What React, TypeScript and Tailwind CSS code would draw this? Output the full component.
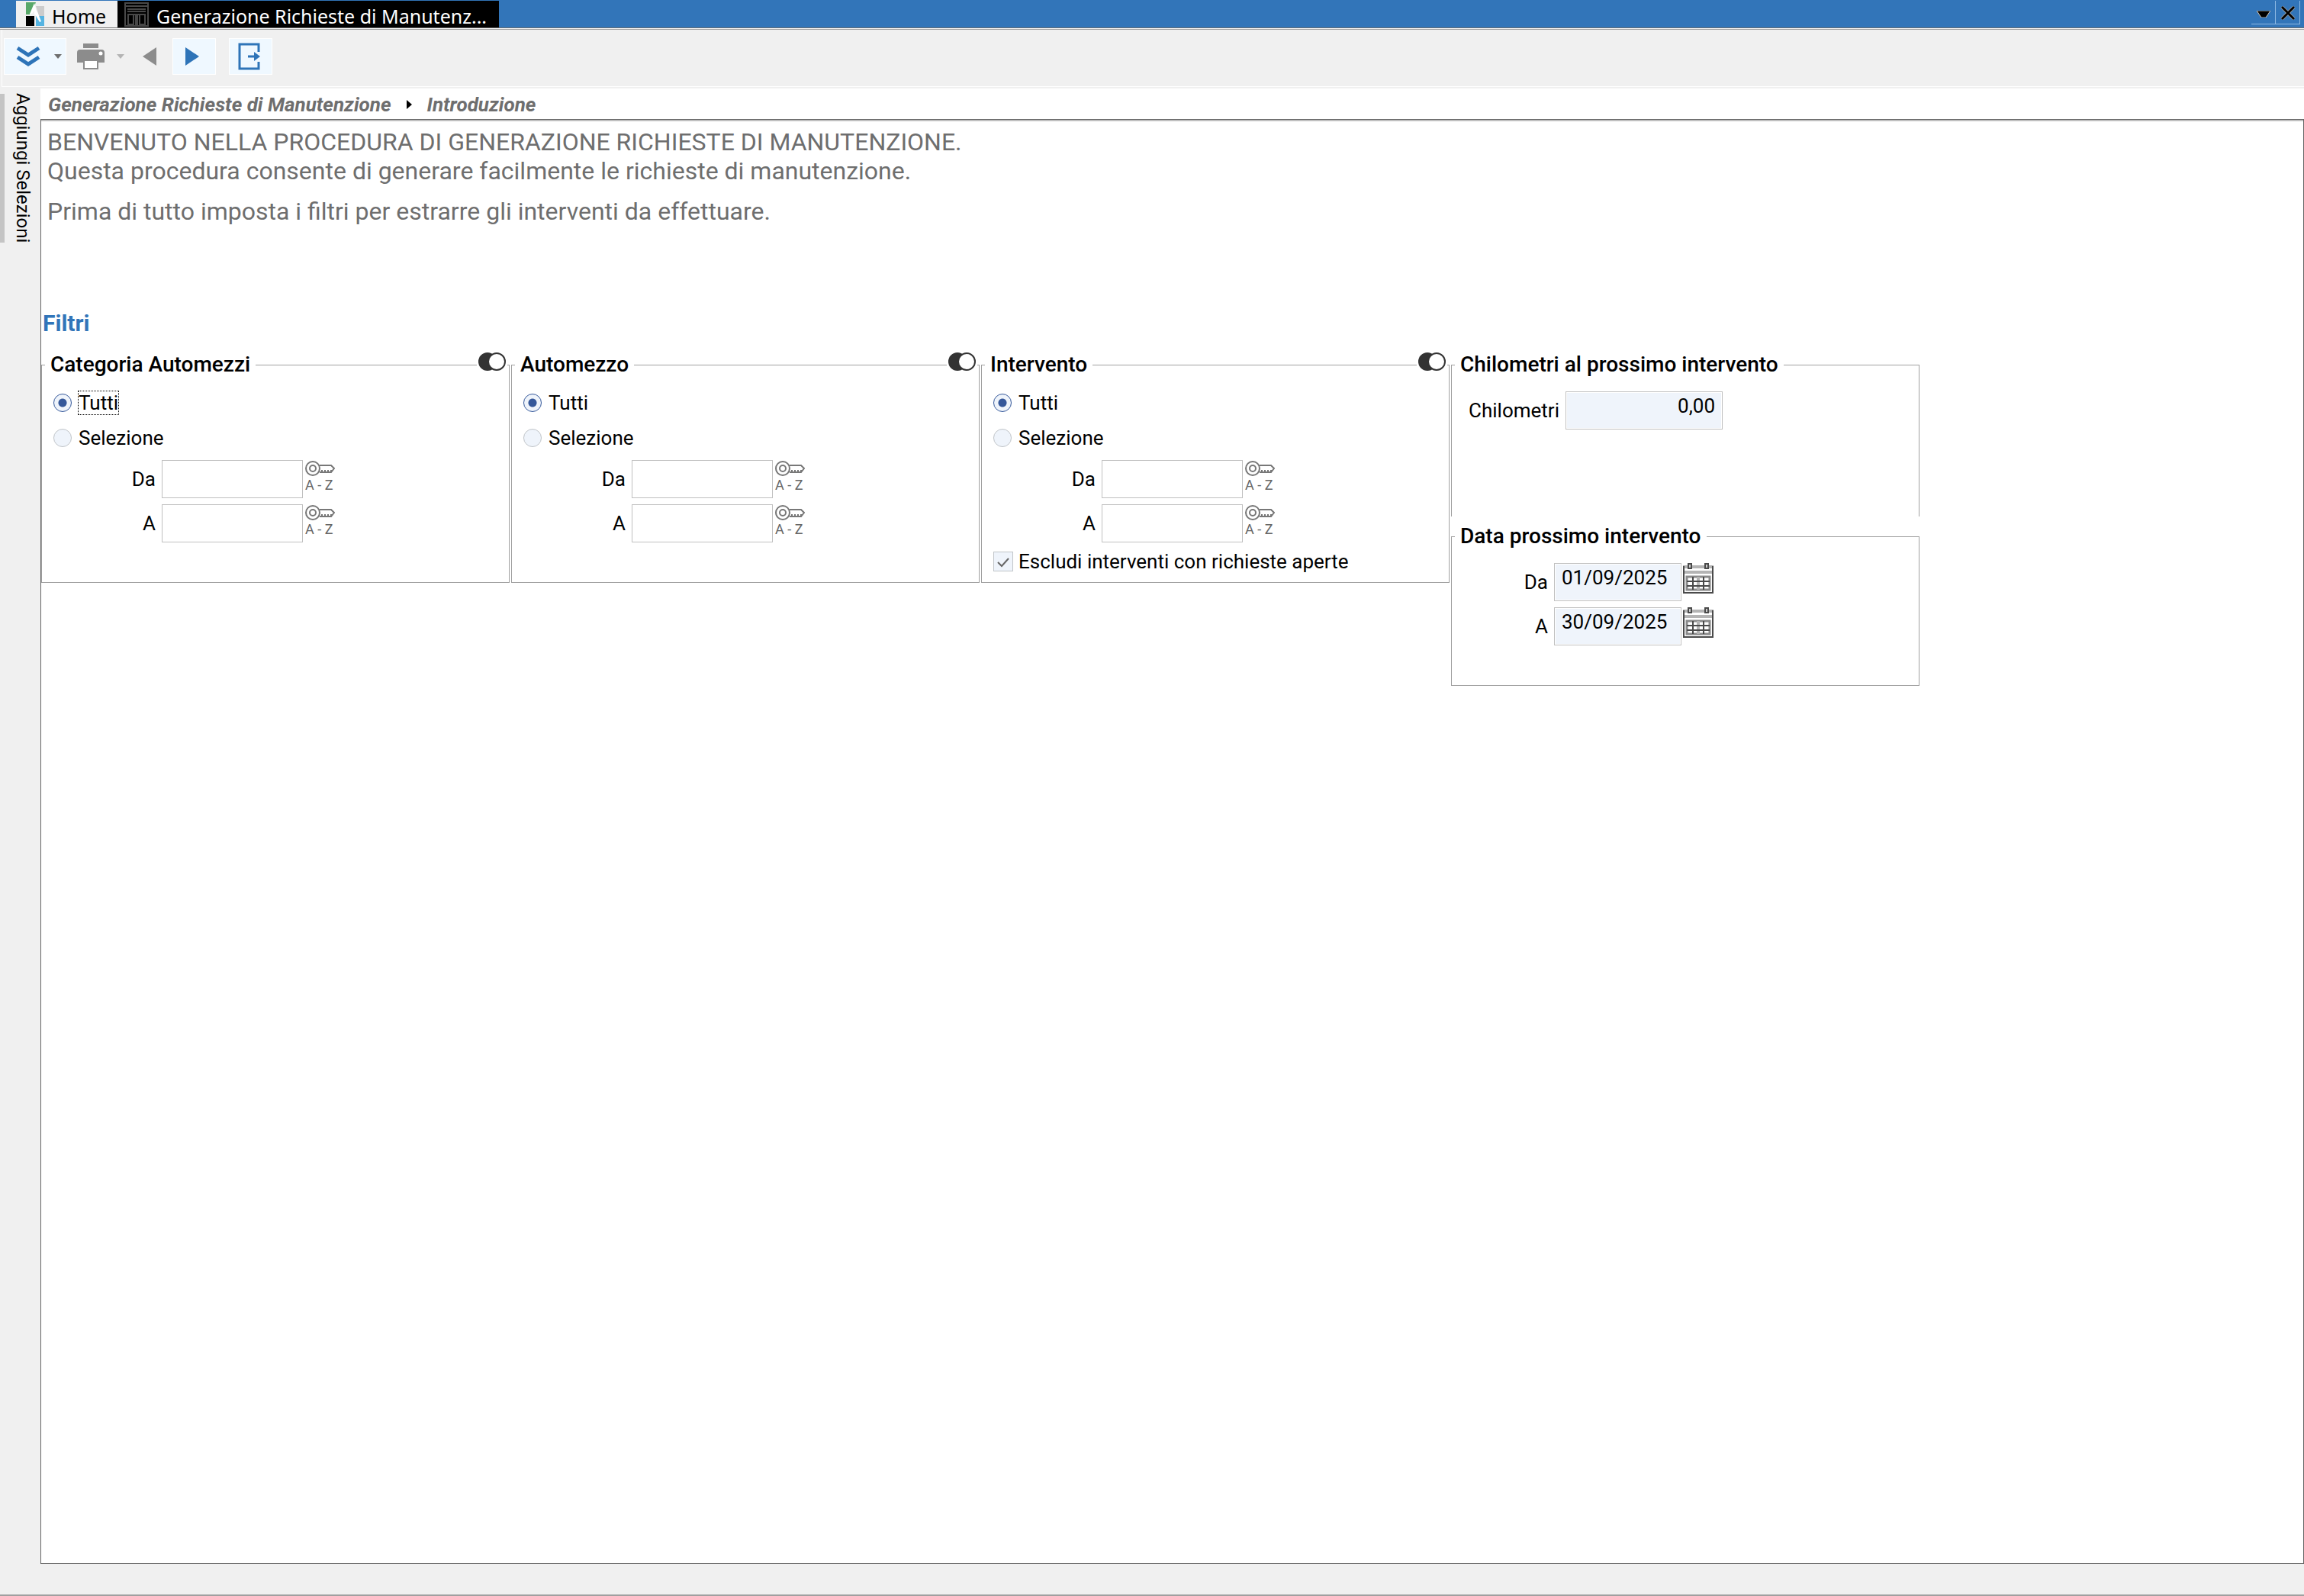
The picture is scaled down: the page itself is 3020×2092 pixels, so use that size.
import { useState } from 'react';
import type { ReactNode } from 'react';
import clsx from 'clsx';

function LogoIcon() {
  return (
    <svg className="w-6 h-8" viewBox="0 0 24 32">
      <path d="M0 0h13L7 16H0z" fill="#58a869" />
      <path d="M13 5h11v13h-7z" fill="#cccccc" />
      <path d="M0 18h11v13H0z" fill="#000" />
      <path d="M13 18h11v13H13z" fill="#56b4e2" />
      <path d="M11 1 5 15l1 2 5-6v5l3 1-1-9z" fill="#fff" />
      <path d="M14 10l6 15-2 1-6-10z" fill="#fff" />
    </svg>
  );
}

function FormIcon() {
  return (
    <svg className="w-8 h-8" viewBox="0 0 32 32" fill="none" stroke="#484848" strokeWidth="2">
      <path d="M1 1h30v30H1zM1 5h30M4 9h24M4 12h24" />
      <path d="M4 16h24M5 16v13h7V16M20 16v13h7V16" />
      <path d="M15 16h2v14h-2z" fill="#484848" />
    </svg>
  );
}

function PrinterIcon() {
  return (
    <svg className="w-9 h-9" viewBox="0 0 36 36">
      <path d="M8 1h20v6H8z" fill="#8c8c8c" />
      <path d="M4 9h28a4 4 0 0 1 4 4v13h-8v-4H8v4H0V13a4 4 0 0 1 4-4z" fill="#8c8c8c" />
      <path d="M9 23h18v11H9z" fill="#fff" stroke="#8c8c8c" strokeWidth="2" />
      <circle cx="31" cy="14" r="2.5" fill="#fff" />
    </svg>
  );
}

function ExitIcon() {
  return (
    <svg className="w-9 h-9" viewBox="0 0 36 36" fill="none" stroke="#2e74b8" strokeWidth="3">
      <path d="M30 12V2H5v32h25V25" />
      <path d="M16 18h11" />
      <path d="M24 12l8 6-8 6z" fill="#2e74b8" stroke="none" />
    </svg>
  );
}

function ChevronsIcon() {
  return (
    <svg className="w-8 h-7" viewBox="0 0 32 28" fill="none" stroke="#2e74b8" strokeWidth="5">
      <path d="M2 3l14 9 14-9M2 15l14 9 14-9" />
    </svg>
  );
}

function Caret({ color }: { color: string }) {
  return (
    <svg className="w-[10px] h-[6px]" viewBox="0 0 10 6">
      <path d="M0 0h10L5 6z" fill={color} />
    </svg>
  );
}

function ToggleIcon() {
  return (
    <svg className="w-9 h-[26px]" viewBox="0 0 36 26">
      <circle cx="12" cy="13" r="12" fill="#333" />
      <circle cx="24" cy="13" r="11" fill="#fff" stroke="#333" strokeWidth="2" />
    </svg>
  );
}

function KeyIcon() {
  return (
    <svg className="w-10 h-11" viewBox="0 0 40 44" fill="none" stroke="#777" strokeWidth="2">
      <circle cx="11" cy="11" r="9" />
      <circle cx="11" cy="11" r="4" />
      <path d="M20 7h15l4 4-4 5H20" />
      <path d="M22 14h14" strokeDasharray="2 2" />
      <text x="1" y="39" fontSize="18" fontFamily="Roboto, sans-serif" fill="#666" stroke="none">
        A - Z
      </text>
    </svg>
  );
}

function CalendarIcon() {
  return (
    <svg className="w-10 h-10" viewBox="0 0 40 40" fill="none">
      <path d="M0 5h40M0 12h40" stroke="#b4b4b4" strokeWidth="4" />
      <path d="M1 4v35h38V4" stroke="#4a4a4a" strokeWidth="2" />
      <path d="M7 1h4v6H7zM29 1h4v6h-4z" fill="#ccc" stroke="#4a4a4a" strokeWidth="2" />
      <path d="M5 18h30v17H5z" stroke="#8a8a8a" strokeWidth="3" />
      <path d="M20 18v17" stroke="#b4b4b4" strokeWidth="4" />
      <path d="M13 18v17M27 18v17M5 24h30M5 30h30" stroke="#4a4a4a" strokeWidth="2" />
    </svg>
  );
}

type PanelProps = { title: string; toggle?: boolean; className?: string; children: ReactNode };

function Panel({ title, toggle, className, children }: PanelProps) {
  return (
    <fieldset className={clsx('relative min-w-0 border border-[#a0a0a0]', className)}>
      <legend className="ml-1 px-[7px] text-[28px] font-medium leading-[30px]">{title}</legend>
      {toggle && (
        <button type="button" aria-label="Inverti" className="absolute -top-8 right-0.5 bg-white px-0.5">
          <ToggleIcon />
        </button>
      )}
      {children}
    </fieldset>
  );
}

type RadioProps = { group: string; label: string; checked: boolean; focused?: boolean; onChange: () => void };

function Radio({ group, label, checked, focused, onChange }: RadioProps) {
  return (
    <label className="flex h-[46px] items-center gap-[9px] pl-[15px]">
      <input
        type="radio"
        name={group}
        checked={checked}
        onChange={onChange}
        className="size-6 appearance-none rounded-full border border-[#c0c4c8] bg-[#eff4fb] checked:border-[#35589a] checked:bg-[radial-gradient(circle,#35589a_5px,#eff4fb_6px)]"
      />
      <span className={clsx('leading-[30px]', focused && 'outline-1 outline-dotted outline-black')}>{label}</span>
    </label>
  );
}

function RangeRow({ id, label }: { id: string; label: string }) {
  return (
    <div className="flex items-center">
      <label htmlFor={id} className="w-[157px] pr-2 text-right">
        {label}
      </label>
      <input id={id} type="text" className="h-[50px] w-[185px] border border-[#c0c0c0] bg-white px-2" />
      <button type="button" aria-label="Cerca" className="ml-0.5 self-start">
        <KeyIcon />
      </button>
    </div>
  );
}

function SelectionPanel({ id, title, focused, children }: { id: string; title: string; focused?: boolean; children?: ReactNode }) {
  const [mode, setMode] = useState('tutti');

  return (
    <Panel title={title} toggle className="h-[301px]">
      <div className="pt-3">
        <Radio group={id} label="Tutti" checked={mode === 'tutti'} focused={focused} onChange={() => setMode('tutti')} />
        <Radio group={id} label="Selezione" checked={mode === 'selezione'} onChange={() => setMode('selezione')} />
      </div>
      <div className="mt-[6px] flex flex-col gap-2">
        <RangeRow id={`${id}-da`} label="Da" />
        <RangeRow id={`${id}-a`} label="A" />
      </div>
      {children}
    </Panel>
  );
}

function DateRow({ id, label, value }: { id: string; label: string; value: string }) {
  return (
    <div className="flex items-center">
      <label htmlFor={id} className="w-[134px] pr-2 text-right">
        {label}
      </label>
      <input
        id={id}
        type="text"
        defaultValue={value}
        className="h-[50px] w-[167px] border border-[#c0c0c0] bg-[#eff4fb] pb-3 pl-[9px] inset-ring inset-ring-white"
      />
      <button type="button" aria-label="Apri calendario" className="ml-0.5 self-start">
        <CalendarIcon />
      </button>
    </div>
  );
}

export default function App() {
  return (
    <div className="flex min-h-screen flex-col border-b-2 border-[#a0a0a0] bg-[#f0f0f0] font-[Roboto,sans-serif] text-[26px] leading-[30px] text-black">
      {/* Window tabs */}
      <header className="flex h-9 bg-[#3275b9] pl-[21px] pt-px font-['Noto_Sans',sans-serif] text-[25px] leading-8">
        <button type="button" className="flex w-[133px] items-center gap-[10px] bg-[#f0f0f0] pl-[13px]">
          <LogoIcon />
          <span className="pt-1">Home</span>
        </button>
        <button type="button" className="flex w-[500px] items-center gap-[10px] bg-black pl-[9px] text-white">
          <FormIcon />
          <span className="whitespace-nowrap pt-1">Generazione Richieste di Manutenz...</span>
        </button>
        <div className="ml-auto mr-[5px] flex h-[31px]">
          <button type="button" aria-label="Elenco schede" className="flex w-8 items-center justify-center border-b border-r border-[#8db9e3] pt-1">
            <svg className="h-[9px] w-[18px]" viewBox="0 0 18 9">
              <path d="M0 0h18l-6 9H6z" fill="#000" stroke="#d8c8b4" strokeWidth="1" />
            </svg>
          </button>
          <button type="button" aria-label="Chiudi" className="flex w-8 items-center justify-center border-b border-r border-[#8db9e3] pt-0.5">
            <svg className="h-[18px] w-5" viewBox="0 0 20 18" fill="none">
              <path d="M2 1l16 16M18 1L2 17" stroke="#d8c8b4" strokeWidth="4" />
              <path d="M2 1l16 16M18 1L2 17" stroke="#000" strokeWidth="3" />
            </svg>
          </button>
        </div>
      </header>
      <div className="h-[3px] border-y border-t-[#6b6b6b] border-b-[#a0a0a0] bg-white" />

      {/* Toolbar */}
      <div className="mb-0.5 ml-0.5 flex h-[75px] items-start border-b border-l border-white pt-[11px]">
        <div className="ml-0.5 flex h-12 w-[82px] items-center border border-white bg-[#eff8ff]">
          <button type="button" aria-label="Espandi" className="ml-[15px]">
            <ChevronsIcon />
          </button>
          <button type="button" aria-label="Altre opzioni" className="ml-[18px]">
            <Caret color="#6e6e6e" />
          </button>
        </div>
        <div className="ml-[14px] flex h-12 w-[66px] items-center">
          <button type="button" aria-label="Stampa">
            <PrinterIcon />
          </button>
          <button type="button" aria-label="Opzioni di stampa" className="ml-4">
            <Caret color="#b4b4b4" />
          </button>
        </div>
        <button type="button" aria-label="Indietro" className="ml-5 flex h-12 w-5 items-center">
          <svg className="h-6 w-[18px]" viewBox="0 0 18 24">
            <path d="M18 0v24L0 12z" fill="#8c8c8c" />
          </svg>
        </button>
        <button type="button" aria-label="Avanti" className="ml-[19px] flex h-12 w-[57px] items-center border border-white bg-[#eff8ff] pl-4">
          <svg className="h-6 w-[18px]" viewBox="0 0 18 24">
            <path d="M0 0v24l18-12z" fill="#2e74b8" />
          </svg>
        </button>
        <button type="button" aria-label="Esci" className="ml-[17px] flex h-12 w-[57px] items-center border border-white bg-[#eff8ff] pl-2">
          <ExitIcon />
        </button>
      </div>

      <div className="flex flex-1">
        {/* Side tab */}
        <aside className="w-[53px] pt-[7px]">
          <button type="button" className="flex h-[195px] items-center border-l-[6px] border-[#c4c4c4] pl-[9px] text-[24px]">
            <span className="whitespace-nowrap [writing-mode:vertical-rl]">Aggiungi Selezioni</span>
          </button>
        </aside>

        <main className="flex min-w-0 flex-1 flex-col">
          <nav className="flex h-10 items-center bg-white pl-[10px] pt-0.5 text-[26px] font-bold italic text-[#6e6e6e]">
            <a href="#procedura">Generazione Richieste di Manutenzione</a>
            <svg className="mx-5 h-3 w-[7px]" viewBox="0 0 7 12">
              <path d="M0 0l7 6-7 6z" fill="#000" />
            </svg>
            <a href="#introduzione">Introduzione</a>
          </nav>

          <section className="flex-1 border border-[#646464] bg-white">
            <div className="border-t-2 border-[#c0c0c0] pl-2 pt-2 text-[32px] leading-[38px] text-[#6e6e6e]">
              <p>BENVENUTO NELLA PROCEDURA DI GENERAZIONE RICHIESTE DI MANUTENZIONE.</p>
              <p>Questa procedura consente di generare facilmente le richieste di manutenzione.</p>
              <p className="mt-[15px]">Prima di tutto imposta i filtri per estrarre gli interventi da effettuare.</p>
            </div>

            <h2 className="mt-[111px] pl-0.5 text-[30px] font-bold leading-[34px] text-[#3275b9]">Filtri</h2>

            <div className="mt-[22px] grid max-w-[2462px] grid-cols-4 items-start gap-0.5">
              <SelectionPanel id="categoria" title="Categoria Automezzi" focused />
              <SelectionPanel id="automezzo" title="Automezzo" />
              <SelectionPanel id="intervento" title="Intervento">
                <label className="mt-[10px] flex items-center gap-[7px] pl-[15px]">
                  <span className="grid size-[26px]">
                    <input
                      type="checkbox"
                      defaultChecked
                      className="peer col-start-1 row-start-1 size-[26px] appearance-none border border-[#c0c4c8] bg-[#eff4fb]"
                    />
                    <svg className="pointer-events-none invisible col-start-1 row-start-1 size-[26px] peer-checked:visible" viewBox="0 0 26 26" fill="none">
                      <path d="M6 14l5 5 9-10" stroke="#666" strokeWidth="2" />
                    </svg>
                  </span>
                  Escludi interventi con richieste aperte
                </label>
              </SelectionPanel>

              <div>
                <Panel title="Chilometri al prossimo intervento" className="h-[214px] border-b-0">
                  <div className="mt-5 flex items-center">
                    <label htmlFor="chilometri" className="w-[149px] pr-2 text-right">
                      Chilometri
                    </label>
                    <input
                      id="chilometri"
                      type="text"
                      defaultValue="0,00"
                      className="h-[50px] w-[206px] border border-[#c0c0c0] bg-[#eff4fb] pb-3 pr-[9px] text-right inset-ring inset-ring-white"
                    />
                  </div>
                </Panel>
                <Panel title="Data prossimo intervento" className="mt-[11px] h-[211px]">
                  <div className="mt-5 flex flex-col gap-2">
                    <DateRow id="data-da" label="Da" value="01/09/2025" />
                    <DateRow id="data-a" label="A" value="30/09/2025" />
                  </div>
                </Panel>
              </div>
            </div>
          </section>
        </main>
      </div>
      <footer className="h-10" />
    </div>
  );
}
